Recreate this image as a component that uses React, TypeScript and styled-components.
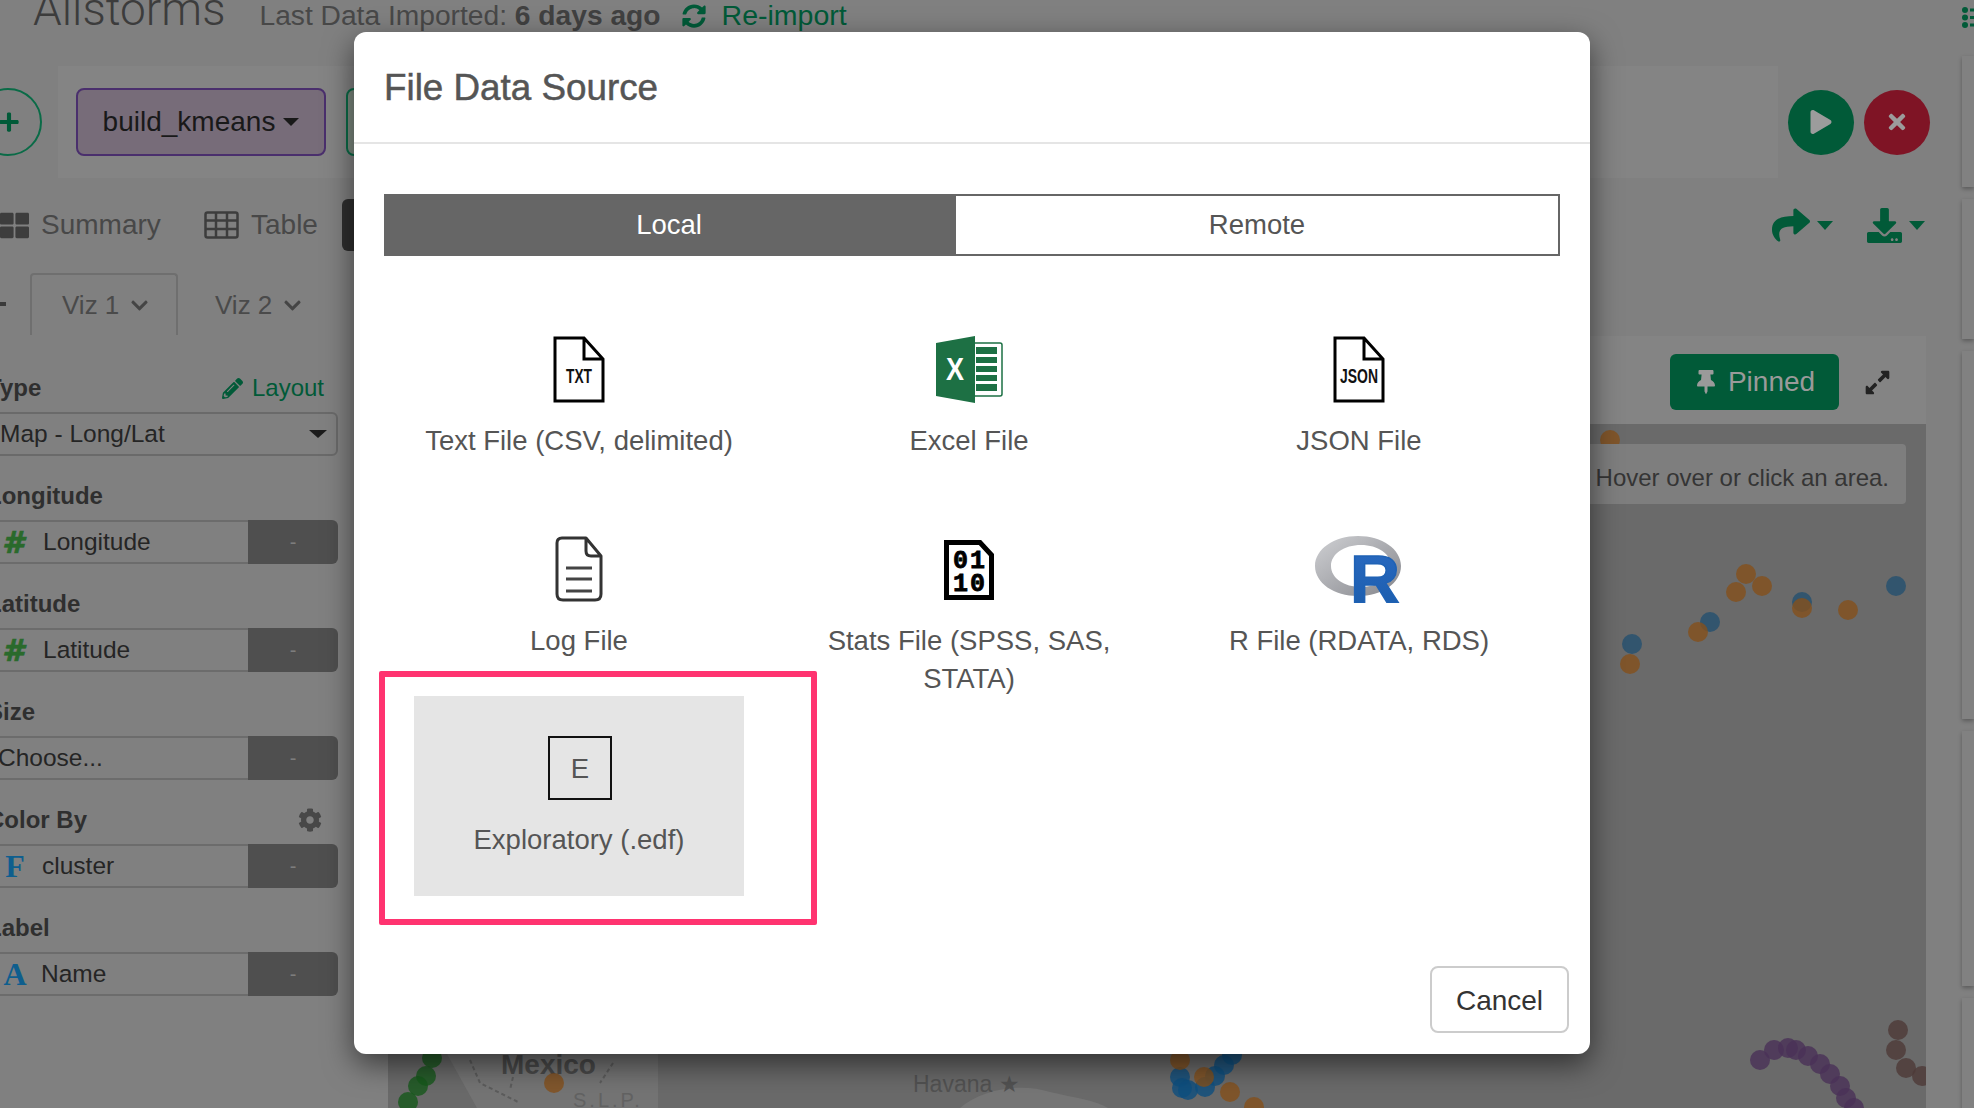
import React from "react";
import styled, { createGlobalStyle } from "styled-components";
import {
  FaPlus,
  FaThLarge,
  FaChevronDown,
  FaPencilAlt,
  FaCog,
  FaSyncAlt,
  FaPlay,
  FaTimes,
  FaShare,
  FaDownload,
  FaThumbtack,
  FaExpandAlt,
} from "react-icons/fa";

const GlobalStyle = createGlobalStyle`
  html, body {
    margin: 0;
    padding: 0;
    background: #808080;
    font-family: "Liberation Sans", Arial, sans-serif;
  }
`;

const GREEN = "#015a38";

const Page = styled.div`
  position: relative;
  width: 1974px;
  height: 1108px;
  overflow: hidden;
  display: grid;
  grid-template-columns: 1962px 1fr;
  background: #808080;
`;

const Main = styled.div`
  display: flex;
  flex-direction: column;
  min-width: 0;
`;

const TitleRow = styled.div`
  height: 90px;
  margin-top: -24px;
  padding-left: 33px;
  display: flex;
  align-items: baseline;
  flex: none;
  box-sizing: border-box;
`;

const ProjectName = styled.span`
  font-family: Roboto, "Liberation Sans", sans-serif;
  font-weight: 300;
  font-size: 46px;
  line-height: 66px;
  color: #3c3c3c;
  margin-right: 34px;
`;

const ImportInfo = styled.span`
  font-size: 28.2px;
  color: #484848;
  b {
    color: #414141;
  }
`;

const ReimportLink = styled.span`
  margin-left: 21px;
  font-size: 28.5px;
  color: ${GREEN};
  display: inline-flex;
  align-items: baseline;
  gap: 16px;
  svg {
    width: 24px;
    height: 26px;
    transform: translateY(4px);
  }
`;

const StepRow = styled.div`
  height: 112px;
  flex: none;
  display: flex;
  align-items: center;
`;

const AddStep = styled.div`
  width: 68px;
  height: 68px;
  margin-left: -26px;
  margin-right: 16px;
  flex: none;
  box-sizing: border-box;
  border: 2px solid #0a6b47;
  border-radius: 50%;
  color: ${GREEN};
  display: flex;
  align-items: center;
  justify-content: center;
  svg {
    width: 22px;
    height: 22px;
    margin-left: 2px;
  }
`;

const StepStrip = styled.div`
  width: 1720px;
  height: 112px;
  flex: none;
  box-sizing: border-box;
  padding-left: 18px;
  background: #848484;
  display: flex;
  align-items: center;
  gap: 20px;
`;

const StepButton = styled.div<{ $green?: boolean }>`
  width: 250px;
  height: 68px;
  flex: none;
  box-sizing: border-box;
  border-radius: 8px;
  border: 2px solid ${(p) => (p.$green ? "#0a6b47" : "#4a2f6d")};
  background: ${(p) => (p.$green ? "#7e8a80" : "#776c79")};
  color: #191919;
  font-size: 28px;
  display: flex;
  align-items: center;
  justify-content: center;
  gap: 8px;
`;

const Caret = styled.span`
  width: 0;
  height: 0;
  border-left: 8px solid transparent;
  border-right: 8px solid transparent;
  border-top: 8px solid #191919;
`;

const RoundButton = styled.div<{ $color: string; $gap: number }>`
  width: 66px;
  height: 65px;
  flex: none;
  margin-left: ${(p) => p.$gap}px;
  border-radius: 50%;
  background: ${(p) => p.$color};
  color: #9c9c9c;
  display: flex;
  align-items: center;
  justify-content: center;
`;

const ViewRow = styled.div`
  height: 95px;
  flex: none;
  box-sizing: border-box;
  padding: 0 37px 1px 0;
  display: flex;
  align-items: center;
`;

const ViewTab = styled.div<{ $width: number }>`
  width: ${(p) => p.$width}px;
  flex: none;
  display: flex;
  align-items: center;
  gap: 12px;
  color: #484848;
  font-size: 28px;
  svg {
    flex: none;
    color: #3d3d3d;
  }
`;

const ActiveView = styled.div`
  width: 60px;
  height: 52px;
  flex: none;
  border-radius: 6px;
  background: #2e2e2e;
`;

const ViewActions = styled.div`
  margin-left: auto;
  display: flex;
  align-items: center;
  color: ${GREEN};
`;

const ActionIcon = styled.div<{ $gap?: number }>`
  display: flex;
  align-items: center;
  gap: 7px;
  margin-left: ${(p) => p.$gap || 0}px;
`;

const ActionCaret = styled.span`
  width: 0;
  height: 0;
  border-left: 8px solid transparent;
  border-right: 8px solid transparent;
  border-top: 9px solid ${GREEN};
`;

const TabsRow = styled.div`
  height: 62px;
  flex: none;
  display: flex;
  align-items: stretch;
`;

const TabStub = styled.div`
  width: 30px;
  flex: none;
  position: relative;
  &::before {
    content: "";
    position: absolute;
    left: 0;
    top: 29px;
    width: 6px;
    height: 4px;
    background: #3a3a3a;
  }
`;

const VizTab = styled.div<{ $active?: boolean }>`
  width: ${(p) => (p.$active ? 148 : 140)}px;
  flex: none;
  box-sizing: border-box;
  padding-left: ${(p) => (p.$active ? 30 : 35)}px;
  border: 2px solid ${(p) => (p.$active ? "#6f6f6f" : "transparent")};
  border-bottom: none;
  border-radius: 4px 4px 0 0;
  display: flex;
  align-items: center;
  gap: 11px;
  color: #4a4a4a;
  font-size: 26px;
  svg {
    width: 19px;
    height: 19px;
    color: #454545;
  }
`;

const Body = styled.div`
  flex: 1;
  min-height: 0;
  display: flex;
`;

const Sidebar = styled.div`
  width: 351px;
  margin-left: -13px;
  margin-right: 50px;
  flex: none;
  box-sizing: border-box;
  padding-top: 37px;
  display: flex;
  flex-direction: column;
  gap: 24px;
`;

const Field = styled.div`
  display: flex;
  flex-direction: column;
  gap: 8px;
`;

const FieldLabel = styled.div`
  height: 32px;
  display: flex;
  align-items: center;
  justify-content: space-between;
  padding-right: 14px;
  font-size: 24px;
  font-weight: 700;
  color: #2f2f2f;
`;

const LayoutLink = styled.span`
  display: flex;
  align-items: center;
  gap: 9px;
  font-weight: 400;
  color: ${GREEN};
  svg {
    width: 21px;
    height: 21px;
  }
`;

const GearIcon = styled(FaCog)`
  width: 24px;
  height: 24px;
  color: #484848;
  margin-right: 2px;
`;

const SelectBox = styled.div`
  height: 44px;
  box-sizing: border-box;
  padding: 0 9px 0 11px;
  border: 2px solid #6a6a6a;
  border-radius: 0 6px 6px 0;
  display: flex;
  align-items: center;
  justify-content: space-between;
  font-size: 24.5px;
  color: #252525;
`;

const SelectCaret = styled.span`
  width: 0;
  height: 0;
  border-left: 9px solid transparent;
  border-right: 9px solid transparent;
  border-top: 8px solid #1c1c1c;
`;

const ColumnRow = styled.div`
  height: 44px;
  display: flex;
`;

const ColumnValue = styled.div`
  flex: 1;
  box-sizing: border-box;
  border-top: 2px solid #6c6c6c;
  border-bottom: 2px solid #6c6c6c;
  display: flex;
  align-items: center;
  font-size: 24.5px;
  color: #252525;
`;

const TypeMark = styled.span<{ $color: string; $width: number }>`
  width: ${(p) => p.$width}px;
  flex: none;
  padding-left: 14px;
  box-sizing: content-box;
  text-align: center;
  font-family: "Liberation Serif", serif;
  font-weight: 700;
  font-size: 32px;
  line-height: 1;
  color: ${(p) => p.$color};
`;

const HashMark = styled(TypeMark)`
  padding-left: 11px;
  font-family: "DejaVu Sans", sans-serif;
  font-style: italic;
  font-size: 31px;
  -webkit-text-stroke: 0.7px #2a6a2c;
`;

const PlainValue = styled.span<{ $inset: number }>`
  padding-left: ${(p) => p.$inset}px;
`;

const RemoveButton = styled.div`
  width: 90px;
  flex: none;
  border-radius: 0 6px 6px 0;
  background: #4f4f4f;
  color: #7d7d7d;
  font-size: 20px;
  display: flex;
  align-items: center;
  justify-content: center;
`;

const MapPanel = styled.div`
  width: 1538px;
  flex: none;
  display: flex;
  flex-direction: column;
`;

const PanelHeader = styled.div`
  height: 88px;
  margin-top: 1px;
  flex: none;
  box-sizing: border-box;
  padding: 4px 35px 0 0;
  background: #848484;
  display: flex;
  align-items: center;
  justify-content: flex-end;
  gap: 25px;
`;

const PinnedButton = styled.div`
  width: 169px;
  height: 56px;
  box-sizing: border-box;
  border-radius: 6px;
  background: ${GREEN};
  color: #9a9a9a;
  font-size: 28px;
  display: flex;
  align-items: center;
  justify-content: center;
  gap: 10px;
`;

const MapArea = styled.div`
  position: relative;
  flex: 1;
  overflow: hidden;
  background: #6a6a6a;
`;

const MapDrawing = styled.svg`
  display: block;
  width: 1538px;
  height: 684px;
`;

const MapTooltip = styled.div`
  position: absolute;
  right: 20px;
  top: 20px;
  width: 330px;
  height: 60px;
  box-sizing: border-box;
  padding: 7px 17px 0 0;
  border-radius: 4px;
  background: #7e7e7e;
  color: #353535;
  font-size: 24px;
  display: flex;
  align-items: center;
  justify-content: flex-end;
`;

const Rail = styled.div`
  padding-top: 7px;
  display: flex;
  flex-direction: column;
  gap: 12px;
`;

const RailIcon = styled.svg`
  display: block;
  width: 12px;
  height: 21px;
  margin-bottom: 16px;
`;

const RailCard = styled.div<{ $height: number }>`
  height: ${(p) => p.$height}px;
  flex: none;
  background: #818181;
  box-shadow: 0 2px 4px rgba(0, 0, 0, 0.3);
`;

const Modal = styled.div`
  position: absolute;
  left: 354px;
  top: 32px;
  width: 1236px;
  height: 1022px;
  display: flex;
  flex-direction: column;
  background: #fff;
  border-radius: 12px;
  box-shadow: 0 10px 30px rgba(0, 0, 0, 0.55);
`;

const ModalHeader = styled.div`
  height: 112px;
  flex: none;
  box-sizing: border-box;
  padding: 2px 30px 0;
  border-bottom: 2px solid #e5e5e5;
  display: flex;
  align-items: center;
`;

const ModalTitle = styled.div`
  font-size: 36.8px;
  color: #555;
  -webkit-text-stroke: 0.5px #555;
`;

const ModalBody = styled.div`
  flex: 1;
  padding: 50px 30px 0;
`;

const SourceTabs = styled.div`
  display: grid;
  grid-template-columns: 570px 1fr;
  height: 62px;
`;

const SourceTab = styled.div<{ $active?: boolean }>`
  box-sizing: border-box;
  border: 2px solid #666;
  background: ${(p) => (p.$active ? "#666" : "#fff")};
  color: ${(p) => (p.$active ? "#fff" : "#555")};
  font-size: 27.5px;
  display: flex;
  align-items: center;
  justify-content: center;
`;

const SourceGrid = styled.div`
  margin-top: 40px;
  padding-left: 30px;
  display: grid;
  grid-template-columns: repeat(3, 330px);
  grid-auto-rows: 200px;
  column-gap: 60px;
`;

const SourceTile = styled.div<{ $selected?: boolean }>`
  padding-top: 40px;
  box-sizing: border-box;
  background: ${(p) => (p.$selected ? "#e5e5e5" : "transparent")};
  display: flex;
  flex-direction: column;
  align-items: center;
  color: #555;
  font-size: 27.5px;
  line-height: ${(p) => (p.$selected ? 35 : 38)}px;
  text-align: center;
`;

const TileIcon = styled.div`
  height: 68px;
  margin-bottom: 18px;
  flex: none;
  display: flex;
  align-items: flex-start;
  justify-content: center;
`;

const EdfBadge = styled.div`
  width: 64px;
  height: 64px;
  margin-left: 2px;
  box-sizing: border-box;
  border: 2px solid #111;
  display: flex;
  align-items: center;
  justify-content: center;
  color: #555;
  font-size: 27.5px;
`;

const ModalFooter = styled.div`
  flex: none;
  padding: 0 21px 21px 0;
  display: flex;
  justify-content: flex-end;
`;

const CancelButton = styled.div`
  width: 139px;
  height: 67px;
  box-sizing: border-box;
  padding-top: 2px;
  border: 2px solid #ccc;
  border-radius: 8px;
  color: #333;
  font-size: 28px;
  display: flex;
  align-items: center;
  justify-content: center;
`;

const Highlight = styled.div`
  position: absolute;
  left: 25px;
  top: 639px;
  width: 438px;
  height: 254px;
  box-sizing: border-box;
  border: 6px solid #ff3370;
  border-radius: 2px;
  pointer-events: none;
`;

const TableIcon = () => (
  <svg width="35" height="28" viewBox="0 0 35 28" fill="none" stroke="currentColor" strokeWidth="2.5">
    <rect x="1.5" y="1.5" width="32" height="25" rx="2" />
    <path d="M1.5 9.5 H33.5 M1.5 18 H33.5 M12 1.5 V26.5 M23 1.5 V26.5" />
  </svg>
);

const PageIcon = ({ label, width }: { label: string; width: number }) => (
  <svg width="52" height="67" viewBox="0 0 52 67">
    <path d="M2 2 H31 L50 23 V65 H2 Z M31 2 V23 H50" fill="#fff" stroke="#000" strokeWidth="3" />
    <text
      x="26"
      y="47"
      textAnchor="middle"
      fontFamily="Liberation Sans, sans-serif"
      fontWeight="700"
      fontSize="20"
      textLength={width}
      lengthAdjust="spacingAndGlyphs"
      fill="#111"
    >
      {label}
    </text>
  </svg>
);

const ExcelIcon = () => (
  <svg width="67" height="67" viewBox="0 0 67 67">
    <rect x="34" y="7" width="32" height="53" rx="2" fill="#fff" stroke="#1d7044" strokeWidth="1.5" />
    <path
      d="M40 11 h21 v7 h-21 z M40 21 h21 v6 h-21 z M40 30 h21 v6 h-21 z M40 39 h21 v6 h-21 z M40 48 h21 v7 h-21 z"
      fill="#1d7044"
    />
    <path d="M0 7 L39 0 V67 L0 60 Z" fill="#1d7044" />
    <text
      x="19"
      y="44"
      textAnchor="middle"
      fontFamily="Liberation Sans, sans-serif"
      fontWeight="700"
      fontSize="32"
      textLength="18"
      lengthAdjust="spacingAndGlyphs"
      fill="#fff"
    >
      X
    </text>
  </svg>
);

const LogIcon = () => (
  <svg width="48" height="66" viewBox="0 0 48 66">
    <path
      d="M7 2 H31 L46 20 V58 Q46 64 40 64 H8 Q2 64 2 58 V7 Q2 2 7 2 Z M31 2 V15 Q31 20 36 20 H46"
      fill="#fff"
      stroke="#333"
      strokeWidth="3"
      strokeLinejoin="round"
    />
    <path d="M11 32 H37 M11 43 H37 M11 55 H37" stroke="#444" strokeWidth="3" />
  </svg>
);

const StatsIcon = () => (
  <svg width="50" height="64" viewBox="0 -4 50 64">
    <path d="M2.5 2.5 H36 L47.5 15 V57.5 H2.5 Z" fill="#fff" stroke="#000" strokeWidth="5" />
    <g
      fontFamily="Liberation Mono, monospace"
      fontWeight="700"
      fontSize="25"
      fill="#000"
      stroke="#000"
      strokeWidth="0.8"
      textAnchor="middle"
    >
      <text x="25" y="28" textLength="32">01</text>
      <text x="25" y="51" textLength="32">10</text>
    </g>
  </svg>
);

const RLogo = () => (
  <svg width="88" height="67" viewBox="0 0 88 67">
    <defs>
      <linearGradient id="rRing" x1="0" y1="0" x2="1" y2="1">
        <stop offset="0" stopColor="#cfd0d3" />
        <stop offset="1" stopColor="#85868c" />
      </linearGradient>
      <linearGradient id="rBlue" x1="0" y1="0" x2="0" y2="1">
        <stop offset="0" stopColor="#2a6ac2" />
        <stop offset="1" stopColor="#1a5cab" />
      </linearGradient>
    </defs>
    <path
      fillRule="evenodd"
      d="M43 0 C67 0 86 13 86 30 C86 47 67 60 43 60 C19 60 0 47 0 30 C0 13 19 0 43 0 Z M46 9 C29 9 16 18 16 30 C16 42 29 51 46 51 C63 51 76 42 76 30 C76 18 63 9 46 9 Z"
      fill="url(#rRing)"
    />
    <text
      x="60"
      y="67"
      textAnchor="middle"
      fontFamily="Liberation Sans, sans-serif"
      fontWeight="700"
      fontSize="68"
      textLength="50"
      lengthAdjust="spacingAndGlyphs"
      fill="url(#rBlue)"
      stroke="#1f62b5"
      strokeWidth="1.5"
    >
      R
    </text>
  </svg>
);

type Dot = [number, number];

const ORANGE: Dot[] = [
  [1610, 440], [1746, 574], [1762, 586], [1736, 592], [1698, 632], [1630, 664], [1802, 608], [1848, 610],
  [554, 1083], [1180, 1060], [1204, 1077], [1230, 1092], [1254, 1107],
];
const BLUE: Dot[] = [[1710, 622], [1632, 644], [1802, 602], [1896, 586]];
const GULF_BLUE: Dot[] = [
  [1180, 1077], [1182, 1088], [1188, 1090], [1205, 1087], [1215, 1076], [1224, 1065], [1232, 1055],
];
const PURPLE: Dot[] = [
  [1760, 1060], [1774, 1050], [1788, 1048], [1796, 1050], [1808, 1056], [1820, 1064], [1830, 1074], [1840, 1086], [1846, 1098], [1854, 1108],
];
const BROWN: Dot[] = [[1898, 1030], [1896, 1050], [1906, 1068], [1922, 1076]];
const MAP_GREEN: Dot[] = [[432, 1058], [426, 1076], [418, 1086], [408, 1102]];

const dots = (list: Dot[], color: string) =>
  list.map(([x, y]) => <circle key={`${color}${x}-${y}`} cx={x} cy={y} r="10" fill={color} fillOpacity="0.8" />);

const MapView = () => (
  <MapDrawing viewBox="388 424 1538 684">
    <path d="M440 1040 L447 1054 L477 1108 H658 V1040 Z" fill="#747474" />
    <path d="M960 1108 C980 1090 1020 1082 1050 1092 C1075 1098 1095 1100 1108 1108 Z" fill="#767676" />
    <path
      d="M470 1060 L480 1083 L520 1103 M613 1063 L600 1083 M513 1077 L510 1090"
      fill="none"
      stroke="#5c5c5c"
      strokeWidth="2"
      strokeDasharray="4 3"
    />
    <g fontFamily="Liberation Sans, sans-serif">
      <text x="501" y="1074" fontWeight="700" fontSize="28" fill="#4a4a4a">Mexico</text>
      <text x="573" y="1107" fontSize="20" letterSpacing="3" fill="#626262">S.L.P.</text>
      <text x="913" y="1092" fontSize="23" fill="#525252">Havana ★</text>
    </g>
    {dots(MAP_GREEN, "#17591c")}
    {dots(GULF_BLUE, "#0e4f7f")}
    {dots(BLUE, "#24506f")}
    {dots(ORANGE, "#85501c")}
    {dots(PURPLE, "#4a3158")}
    {dots(BROWN, "#4e3a37")}
  </MapDrawing>
);

const fields = [
  { label: "Longitude", mark: "#", value: "Longitude", inset: 15 },
  { label: "Latitude", mark: "#", value: "Latitude", inset: 15 },
  { label: "Size", value: "Choose...", inset: 11 },
  { label: "Color By", mark: "F", value: "cluster", gear: true, inset: 13 },
  { label: "Label", mark: "A", value: "Name", inset: 12 },
];

const sources = [
  { name: "Text File (CSV, delimited)", icon: <PageIcon label="TXT" width={26} /> },
  { name: "Excel File", icon: <ExcelIcon /> },
  { name: "JSON File", icon: <PageIcon label="JSON" width={38} /> },
  { name: "Log File", icon: <LogIcon /> },
  { name: "Stats File (SPSS, SAS, STATA)", icon: <StatsIcon /> },
  { name: "R File (RDATA, RDS)", icon: <RLogo /> },
  { name: "Exploratory (.edf)", icon: <EdfBadge>E</EdfBadge>, selected: true },
];

const App = () => {
  return (
    <Page>
      <GlobalStyle />
      <Main>
        <TitleRow>
          <ProjectName>Allstorms</ProjectName>
          <ImportInfo>
            Last Data Imported: <b>6 days ago</b>
          </ImportInfo>
          <ReimportLink>
            <FaSyncAlt />
            Re-import
          </ReimportLink>
        </TitleRow>
        <StepRow>
          <AddStep>
            <FaPlus />
          </AddStep>
          <StepStrip>
            <StepButton>
              build_kmeans
              <Caret />
            </StepButton>
            <StepButton $green />
          </StepStrip>
          <RoundButton $color={GREEN} $gap={10}>
            <FaPlay size={24} />
          </RoundButton>
          <RoundButton $color="#7f1425" $gap={10}>
            <FaTimes size={24} />
          </RoundButton>
        </StepRow>
        <ViewRow>
          <ViewTab $width={204}>
            <FaThLarge size={29} />
            Summary
          </ViewTab>
          <ViewTab $width={138}>
            <TableIcon />
            Table
          </ViewTab>
          <ActiveView />
          <ViewActions>
            <ActionIcon>
              <FaShare size={38} />
              <ActionCaret />
            </ActionIcon>
            <ActionIcon $gap={34}>
              <FaDownload size={35} />
              <ActionCaret />
            </ActionIcon>
          </ViewActions>
        </ViewRow>
        <TabsRow>
          <TabStub />
          <VizTab $active>
            Viz 1
            <FaChevronDown />
          </VizTab>
          <VizTab>
            Viz 2
            <FaChevronDown />
          </VizTab>
        </TabsRow>
        <Body>
          <Sidebar>
            <Field>
              <FieldLabel>
                Type
                <LayoutLink>
                  <FaPencilAlt />
                  Layout
                </LayoutLink>
              </FieldLabel>
              <SelectBox>
                Map - Long/Lat
                <SelectCaret />
              </SelectBox>
            </Field>
            {fields.map((f) => (
              <Field key={f.label}>
                <FieldLabel>
                  {f.label}
                  {f.gear && <GearIcon />}
                </FieldLabel>
                <ColumnRow>
                  <ColumnValue>
                    {f.mark === "#" && (
                      <HashMark $color="#2a6a2c" $width={30}>
                        #
                      </HashMark>
                    )}
                    {f.mark && f.mark !== "#" && (
                      <TypeMark $color="#0e5e8e" $width={28}>
                        {f.mark}
                      </TypeMark>
                    )}
                    <PlainValue $inset={f.inset}>{f.value}</PlainValue>
                  </ColumnValue>
                  <RemoveButton>-</RemoveButton>
                </ColumnRow>
              </Field>
            ))}
          </Sidebar>
          <MapPanel>
            <PanelHeader>
              <PinnedButton>
                <FaThumbtack size={24} />
                Pinned
              </PinnedButton>
              <FaExpandAlt size={27} color="#222" />
            </PanelHeader>
            <MapArea>
              <MapView />
              <MapTooltip>Hover over or click an area.</MapTooltip>
            </MapArea>
          </MapPanel>
        </Body>
      </Main>
      <Rail>
        <RailIcon viewBox="0 0 12 21">
          <g fill={GREEN}>
            <circle cx="3" cy="3" r="3" />
            <circle cx="3" cy="10.5" r="3" />
            <circle cx="3" cy="18" r="3" />
            <rect x="8" y="1.5" width="4" height="3" />
            <rect x="8" y="9" width="4" height="3" />
            <rect x="8" y="16.5" width="4" height="3" />
          </g>
        </RailIcon>
        <RailCard $height={131} />
        <RailCard $height={140} />
        <RailCard $height={368} />
        <RailCard $height={255} />
        <RailCard $height={120} />
      </Rail>
      <Modal>
        <ModalHeader>
          <ModalTitle>File Data Source</ModalTitle>
        </ModalHeader>
        <ModalBody>
          <SourceTabs>
            <SourceTab $active>Local</SourceTab>
            <SourceTab>Remote</SourceTab>
          </SourceTabs>
          <SourceGrid>
            {sources.map((s) => (
              <SourceTile key={s.name} $selected={s.selected}>
                <TileIcon>{s.icon}</TileIcon>
                {s.name}
              </SourceTile>
            ))}
          </SourceGrid>
        </ModalBody>
        <ModalFooter>
          <CancelButton>Cancel</CancelButton>
        </ModalFooter>
        <Highlight />
      </Modal>
    </Page>
  );
};

export default App;
